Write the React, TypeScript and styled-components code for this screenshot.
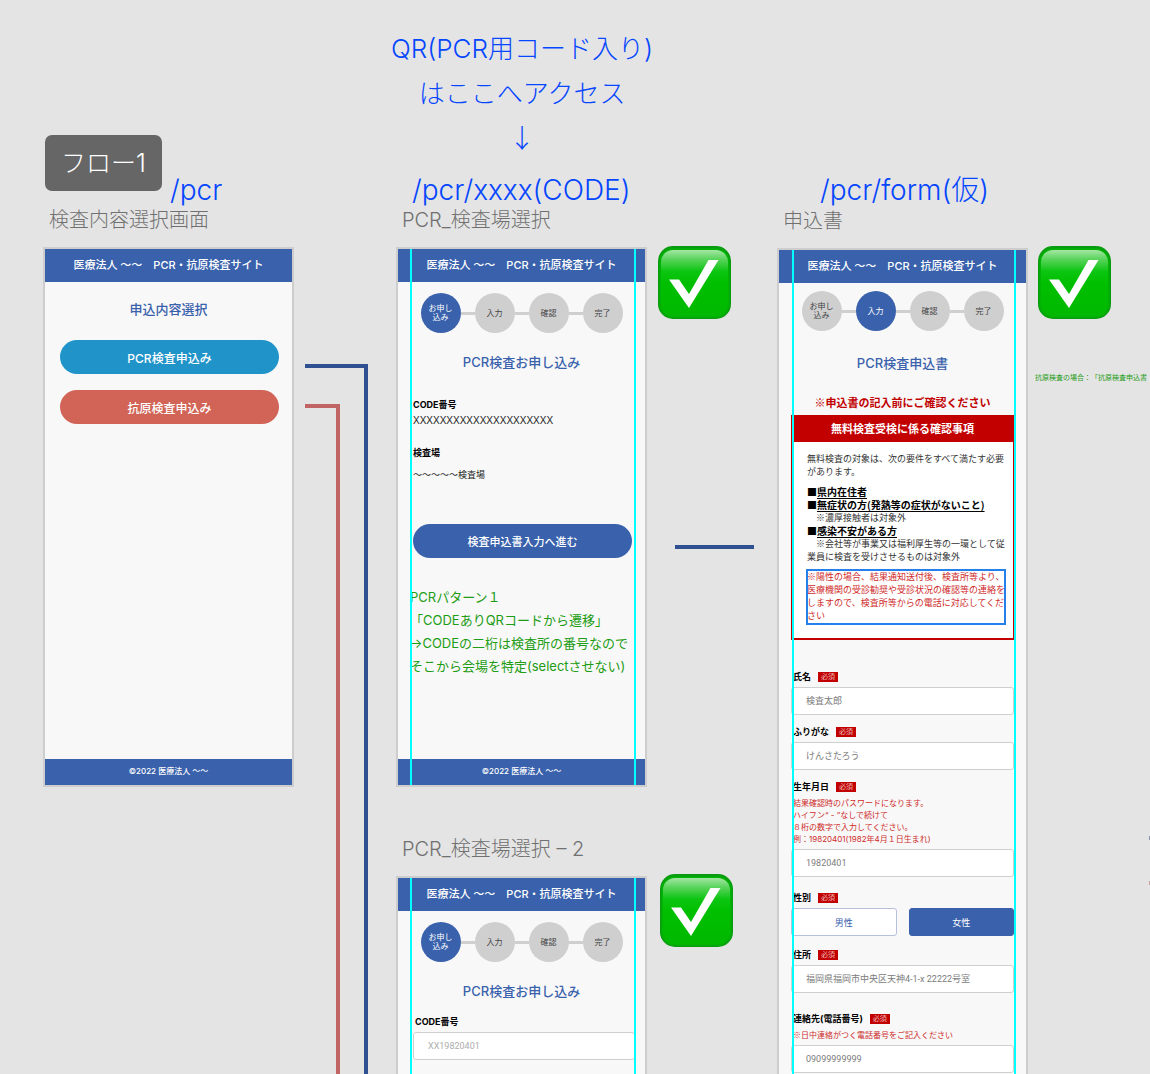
import React, { useId } from "react";
import styled, { createGlobalStyle, css } from "styled-components";

const color = {
  canvas: "#e4e4e4",
  frame: "#cdcdcd",
  paper: "#f8f8f8",
  navy: "#3961ac",
  sky: "#2094c9",
  coral: "#d16456",
  red: "#c20000",
  hint: "#cf2b2b",
  grey: "#cfcfcf",
  note: "#1d9c14",
  route: "#0546ff",
  guide: "#00ffff",
};

const GlobalStyle = createGlobalStyle`
  *, *::before, *::after { box-sizing: border-box; }
  body {
    margin: 0;
    background: ${color.canvas};
    font-family: Inter, "Noto Sans CJK JP", sans-serif;
    text-spacing-trim: space-all;
  }
  h1, h2, h3, p, figure { margin: 0; padding: 0; }
  button, input { font-family: inherit; }
`;

/* ---------- canvas ---------- */

const Canvas = styled.main`
  position: relative;
  height: 100vh;
  overflow: hidden;
`;

type Spot = { $x: number; $y: number };

const placed = css<Spot>`
  position: absolute;
  left: ${(p) => p.$x}px;
  top: ${(p) => p.$y}px;
`;

const RouteLabel = styled.p<Spot & { $size: number }>`
  ${placed}
  color: ${color.route};
  font-size: ${(p) => p.$size}px;
  font-weight: 300;
  line-height: 45px;
  text-align: center;
  white-space: nowrap;
`;

const FlowTag = styled.h1<Spot>`
  ${placed}
  padding: 0 16px;
  border-radius: 7px;
  background: #666;
  color: #fff;
  font-size: 25px;
  font-weight: 300;
  line-height: 56px;
  white-space: nowrap;
`;

const SideNote = styled.p<Spot>`
  ${placed}
  color: ${color.note};
  font-size: 7px;
  line-height: 12px;
  white-space: nowrap;
`;

const Elbow = styled.div<Spot & { $w: number; $tone: string }>`
  ${placed}
  bottom: 0;
  width: ${(p) => p.$w}px;
  border-top: 4px solid ${(p) => p.$tone};
  border-right: 4px solid ${(p) => p.$tone};
`;

const Link = styled.div<Spot & { $w: number; $tone: string }>`
  ${placed}
  width: ${(p) => p.$w}px;
  height: 4px;
  background: ${(p) => p.$tone};
`;

const CheckIcon = styled.svg<Spot>`
  ${placed}
  width: 73px;
  height: 73px;
`;

/* full-width symbols (※, arrows) come from the Japanese face */
const Symbol = styled.span`
  font-family: "Noto Sans CJK JP", sans-serif;
  line-height: 1;
`;

/* ---------- artboard ---------- */

const Board = styled.figure<Spot>`
  ${placed}
  width: 251px;
`;

const Caption = styled.figcaption`
  margin-bottom: 13px;
  padding-left: 6px;
  color: #707070;
  font-size: 20px;
  font-weight: 300;
  line-height: 28px;
  white-space: nowrap;
`;

const Screen = styled.div<{ $minHeight: number }>`
  position: relative;
  display: flex;
  flex-direction: column;
  min-height: ${(p) => p.$minHeight}px;
  border: 2px solid ${color.frame};
  background: ${color.paper};
`;

const SiteHeader = styled.header`
  background: ${color.navy};
  color: #fff;
  font-size: 11px;
  font-weight: 500;
  line-height: 33px;
  text-align: center;
  white-space: pre;
`;

const SiteFooter = styled.footer`
  padding-bottom: 2px;
  background: ${color.navy};
  color: #fff;
  font-size: 8px;
  font-weight: 500;
  line-height: 24px;
  text-align: center;
`;

const Body = styled.div`
  flex: 1;
`;

const Guide = styled.div<{ $x: number }>`
  position: absolute;
  top: 0;
  bottom: 0;
  left: ${(p) => p.$x}px;
  width: 2px;
  background: ${color.guide};
`;

const Heading = styled.h2<{ $top: number }>`
  margin-top: ${(p) => p.$top}px;
  color: ${color.navy};
  font-size: 13px;
  font-weight: 500;
  line-height: 20px;
  text-align: center;
`;

/* ---------- stepper ---------- */

const StepRow = styled.ol<{ $top: number }>`
  display: flex;
  justify-content: center;
  align-items: center;
  margin: ${(p) => p.$top}px 0 0;
  padding: 0;
  list-style: none;
`;

const StepItem = styled.li`
  display: flex;
  align-items: center;

  & + &::before {
    content: "";
    width: 14px;
    height: 3px;
    background: ${color.grey};
  }
`;

const StepDot = styled.span<{ $on: boolean }>`
  display: grid;
  place-content: center;
  width: 40px;
  height: 40px;
  border-radius: 50%;
  background: ${(p) => (p.$on ? color.navy : color.grey)};
  color: ${(p) => (p.$on ? "#fff" : "#444")};
  font-size: 8px;
  line-height: 9px;
  text-align: center;
  white-space: pre-line;
`;

/* ---------- content ---------- */

const Actions = styled.div<{ $top: number }>`
  display: flex;
  flex-direction: column;
  gap: 16px;
  margin-top: ${(p) => p.$top}px;
  padding: 0 13px 0 15px;
`;

const Pill = styled.button<{ $tone: string; $size?: number }>`
  height: 34px;
  padding: 0;
  border: 0;
  border-radius: 17px;
  background: ${(p) => p.$tone};
  color: #fff;
  font-size: ${(p) => p.$size ?? 12}px;
  font-weight: 500;
`;

const Details = styled.dl`
  margin: 27px 0 0;
  padding-left: 15px;
`;

const Term = styled.dt`
  font-size: 9px;
  font-weight: 700;
  line-height: 12px;
`;

const Value = styled.dd<{ $size: number; $gap: number; $after?: number }>`
  margin: ${(p) => p.$gap}px 0 ${(p) => p.$after ?? 0}px;
  color: #222;
  font-family: "Liberation Sans", "Noto Sans CJK JP", sans-serif;
  font-size: ${(p) => p.$size}px;
  line-height: 14px;
`;

const Memo = styled.p`
  margin-top: 28px;
  padding-left: 12px;
  color: ${color.note};
  font-size: 13px;
  font-weight: 400;
  line-height: 23px;
  white-space: pre;
`;

const Warning = styled.p`
  margin-top: 21px;
  color: ${color.red};
  font-family: "Noto Sans CJK JP", sans-serif;
  font-size: 11px;
  font-weight: 700;
  line-height: 16px;
  text-align: center;
  white-space: nowrap;
`;

const Terms = styled.section`
  margin: 5px 12px 0;
  border: 1px solid ${color.red};
  border-bottom-width: 2px;
  background: #fff;
`;

const TermsTitle = styled.h3`
  background: ${color.red};
  color: #fff;
  font-size: 11px;
  font-weight: 700;
  line-height: 26px;
  text-align: center;
`;

const TermsBody = styled.div`
  display: flex;
  flex-direction: column;
  gap: 7px;
  padding: 10px 0 14px 15px;
  color: #333;
  font-family: "Noto Sans CJK JP", sans-serif;
  font-size: 9px;
  line-height: 13px;
  white-space: pre;
`;

const Condition = styled.p`
  color: #000;
  font-size: 10px;
  font-weight: 700;

  u {
    text-underline-offset: 2px;
  }
`;

const Selected = styled.p`
  align-self: flex-start;
  padding-bottom: 2px;
  outline: 2px solid #2680eb;
  outline-offset: -1px;
  color: ${color.hint};
`;

/* ---------- form ---------- */

const Form = styled.form<{ $top: number; $inset?: boolean }>`
  margin-top: ${(p) => p.$top}px;
  padding: ${(p) => (p.$inset ? "0 10px 0 15px" : "0 12px")};
`;

const FieldBox = styled.div<{ $top: number }>`
  display: flex;
  flex-direction: column;
  gap: 4px;
  margin-top: ${(p) => p.$top}px;
`;

const LabelRow = styled.div`
  display: flex;
  align-items: center;
  gap: 7px;
  padding-left: 2px;
  font-size: 9px;
  font-weight: 700;
  line-height: 12px;
`;

const Required = styled.span`
  padding: 0 3px;
  background: ${color.red};
  color: #fff;
  font-size: 7px;
  font-weight: 300;
  line-height: 10px;
`;

const Hint = styled.p`
  padding-left: 2px;
  color: ${color.hint};
  font-size: 8px;
  line-height: 12px;
  white-space: pre;
`;

const TextBox = styled.input<{ $faint?: boolean }>`
  width: 100%;
  height: 28px;
  padding: 0 14px;
  border: 1px solid ${color.grey};
  border-radius: 3px;
  background: #fff;
  font-family: Roboto, "Noto Sans CJK JP", sans-serif;
  font-size: 9px;

  &::placeholder {
    color: ${(p) => (p.$faint ? "#adadad" : "#7c7c7c")};
    opacity: 1;
  }
`;

const Choices = styled.div`
  display: grid;
  grid-template-columns: 1fr 1fr;
  gap: 12px;
`;

const Choice = styled.button<{ $on?: boolean }>`
  height: 28px;
  padding: 0;
  border: 1px solid ${(p) => (p.$on ? color.navy : "#b4c0dc")};
  border-radius: 3px;
  background: ${(p) => (p.$on ? color.navy : "#fff")};
  color: ${(p) => (p.$on ? "#fff" : color.navy)};
  font-size: 9px;
`;

/* ---------- parts ---------- */

function Check({ x, y }: { x: number; y: number }) {
  const id = useId();
  return (
    <CheckIcon $x={x} $y={y} viewBox="0 0 73 73" role="img" aria-label="完了済み">
      <defs>
        <linearGradient id={id} x1="0" y1="0" x2="0" y2="1">
          <stop offset="0" stopColor="#a4e6a4" />
          <stop offset="0.14" stopColor="#5ad45c" />
          <stop offset="0.32" stopColor="#0cc512" />
          <stop offset="0.5" stopColor="#00bf00" />
          <stop offset="1" stopColor="#00b800" />
        </linearGradient>
      </defs>
      <rect width="73" height="73" rx="15" fill="#0a9c10" />
      <rect x="1" y="2" width="71" height="70" rx="14" fill="#05a90a" />
      <rect x="2" y="3" width="69" height="68" rx="13" fill="#02b205" />
      <rect x="3" y="4" width="67" height="66" rx="12" fill={`url(#${id})`} />
      <path d="M11 33.500H21L31 48L50.500 14H60.500L31 62Z" fill="#fff" />
    </CheckIcon>
  );
}

const stepNames = ["お申し\n込み", "入力", "確認", "完了"];

function Steps({ current, top }: { current: number; top: number }) {
  return (
    <StepRow $top={top}>
      {stepNames.map((name, i) => (
        <StepItem key={name} aria-current={i === current ? "step" : undefined}>
          <StepDot $on={i === current}>{name}</StepDot>
        </StepItem>
      ))}
    </StepRow>
  );
}

type ArtboardProps = {
  x: number;
  y: number;
  title: string;
  minHeight: number;
  guides?: number[];
  footer?: boolean;
  children: React.ReactNode;
};

function Artboard({ x, y, title, minHeight, guides = [], footer, children }: ArtboardProps) {
  return (
    <Board $x={x} $y={y}>
      <Caption>{title}</Caption>
      <Screen $minHeight={minHeight}>
        <SiteHeader>{"医療法人 〜〜　PCR・抗原検査サイト"}</SiteHeader>
        <Body>{children}</Body>
        {footer && <SiteFooter>©2022 医療法人 〜〜</SiteFooter>}
        {guides.map((g) => (
          <Guide key={g} $x={g} />
        ))}
      </Screen>
    </Board>
  );
}

type FieldProps = {
  label: string;
  placeholder: string;
  top: number;
  hint?: React.ReactNode;
  required?: boolean;
};

function Field({ label, placeholder, top, hint, required = true }: FieldProps) {
  const id = useId();
  return (
    <FieldBox $top={top}>
      <LabelRow>
        <label htmlFor={id}>{label}</label>
        {required && <Required>必須</Required>}
      </LabelRow>
      {hint && <Hint>{hint}</Hint>}
      <TextBox id={id} placeholder={placeholder} $faint={!required} />
    </FieldBox>
  );
}

export default function App() {
  return (
    <>
      <GlobalStyle />
      <Canvas>
        <FlowTag $x={45} $y={135}>フロー1</FlowTag>

        <Artboard x={43} y={206} title="検査内容選択画面" minHeight={540} footer>
          <Heading $top={17}>申込内容選択</Heading>
          <Actions $top={21}>
            <Pill type="button" $tone={color.sky}>PCR検査申込み</Pill>
            <Pill type="button" $tone={color.coral}>抗原検査申込み</Pill>
          </Actions>
        </Artboard>

        <Artboard x={396} y={206} title="PCR_検査場選択" minHeight={540} guides={[12, 236]} footer>
          <Steps current={0} top={11} />
          <Heading $top={19}>PCR検査お申し込み</Heading>
          <Details>
            <Term>CODE番号</Term>
            <Value $size={10} $gap={3} $after={19}>XXXXXXXXXXXXXXXXXXXXX</Value>
            <Term>検査場</Term>
            <Value $size={9} $gap={9}>〜〜〜〜〜検査場</Value>
          </Details>
          <Actions $top={42}>
            <Pill type="button" $tone={color.navy} $size={11}>検査申込書入力へ進む</Pill>
          </Actions>
          <Memo>
            {"PCRパターン１\n「CODEありQRコードから遷移」\n→CODEの二桁は検査所の番号なので\nそこから会場を特定(selectさせない)"}
          </Memo>
        </Artboard>

        <Artboard x={396} y={835} title="PCR_検査場選択 – 2" minHeight={540} guides={[12, 236]}>
          <Steps current={0} top={11} />
          <Heading $top={19}>PCR検査お申し込み</Heading>
          <Form $top={15} $inset>
            <Field label="CODE番号" placeholder="XX19820401" top={0} required={false} />
          </Form>
        </Artboard>

        <Artboard x={777} y={207} title="申込書" minHeight={1200} guides={[13, 235]}>
          <Steps current={1} top={8} />
          <Heading $top={22}>PCR検査申込書</Heading>
          <Warning>※申込書の記入前にご確認ください</Warning>
          <Terms>
            <TermsTitle>無料検査受検に係る確認事項</TermsTitle>
            <TermsBody>
              <p>{"無料検査の対象は、次の要件をすべて満たす必要\nがあります。"}</p>
              <div>
                <Condition>■<u>県内在住者</u></Condition>
                <Condition>■<u>無症状の方(発熱等の症状がないこと)</u></Condition>
                <p>{"　※濃厚接触者は対象外"}</p>
                <Condition>■<u>感染不安がある方</u></Condition>
                <p>{"　※会社等が事業又は福利厚生等の一環として従\n業員に検査を受けさせるものは対象外"}</p>
              </div>
              <Selected>
                {"※陽性の場合、結果通知送付後、検査所等より、\n医療機関の受診勧奨や受診状況の確認等の連絡を\nしますので、検査所等からの電話に対応してくだ\nさい"}
              </Selected>
            </TermsBody>
          </Terms>
          <Form $top={31}>
            <Field label="氏名" placeholder="検査太郎" top={0} />
            <Field label="ふりがな" placeholder="けんさたろう" top={11} />
            <Field
              label="生年月日"
              placeholder="19820401"
              top={11}
              hint={"結果確認時のパスワードになります。\nハイフン“ - ”なしで続けて\n８桁の数字で入力してください。\n例：19820401(1982年4月１日生まれ)"}
            />
            <FieldBox $top={15} role="group" aria-label="性別">
              <LabelRow>
                <span>性別</span>
                <Required>必須</Required>
              </LabelRow>
              <Choices>
                <Choice type="button" aria-pressed={false}>男性</Choice>
                <Choice type="button" aria-pressed $on>女性</Choice>
              </Choices>
            </FieldBox>
            <Field label="住所" placeholder="福岡県福岡市中央区天神4-1-x 22222号室" top={13} />
            <Field
              label="連絡先(電話番号)"
              placeholder="09099999999"
              top={20}
              hint={
                <>
                  <Symbol>※</Symbol>日中連絡がつく電話番号をご記入ください
                </>
              }
            />
          </Form>
        </Artboard>

        <RouteLabel $x={391} $y={26} $size={26}>
          QR(PCR用コード入り)
          <br />
          はここへアクセス
          <br />
          <Symbol>↓</Symbol>
        </RouteLabel>
        <RouteLabel $x={170} $y={168} $size={28}>/pcr</RouteLabel>
        <RouteLabel $x={412} $y={168} $size={28}>/pcr/xxxx(CODE)</RouteLabel>
        <RouteLabel $x={820} $y={168} $size={28}>/pcr/form(仮)</RouteLabel>

        <Elbow $x={305} $y={364} $w={63} $tone="#2f5091" />
        <Elbow $x={305} $y={404} $w={35} $tone="#c06464" />
        <Link $x={675} $y={545} $w={79} $tone="#2f5091" />
        <Link $x={1149} $y={836} $w={40} $tone="#8b93ae" />
        <Link $x={1149} $y={881} $w={40} $tone="#c7a3a6" />

        <Check x={658} y={246} />
        <Check x={1038} y={246} />
        <Check x={660} y={874} />

        <SideNote $x={1035} $y={372}>抗原検査の場合：「抗原検査申込書</SideNote>
      </Canvas>
    </>
  );
}
